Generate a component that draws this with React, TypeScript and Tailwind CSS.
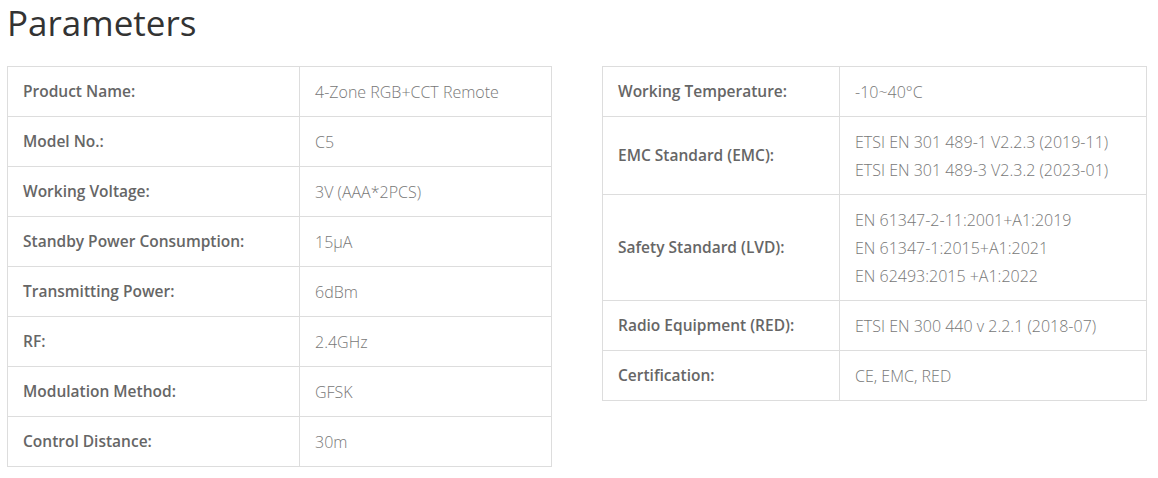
import React from 'react';

type Row = { label: string; values: string[] };

const left: Row[] = [
  { label: 'Product Name:', values: ['4-Zone RGB+CCT Remote'] },
  { label: 'Model No.:', values: ['C5'] },
  { label: 'Working Voltage:', values: ['3V (AAA*2PCS)'] },
  { label: 'Standby Power Consumption:', values: ['15μA'] },
  { label: 'Transmitting Power:', values: ['6dBm'] },
  { label: 'RF:', values: ['2.4GHz'] },
  { label: 'Modulation Method:', values: ['GFSK'] },
  { label: 'Control Distance:', values: ['30m'] },
];

const right: Row[] = [
  { label: 'Working Temperature:', values: ['-10~40°C'] },
  { label: 'EMC Standard (EMC):', values: ['ETSI EN 301 489-1 V2.2.3 (2019-11)', 'ETSI EN 301 489-3 V2.3.2 (2023-01)'] },
  {
    label: 'Safety Standard (LVD):',
    values: ['EN 61347-2-11:2001+A1:2019', 'EN 61347-1:2015+A1:2021', 'EN 62493:2015 +A1:2022'],
  },
  { label: 'Radio Equipment (RED):', values: ['ETSI EN 300 440 v 2.2.1 (2018-07)'] },
  { label: 'Certification:', values: ['CE, EMC, RED'] },
];

const ParamTable = ({ rows, labelWidth }: { rows: Row[]; labelWidth: string }) => (
  <table className="w-[545px] border-collapse border border-[#dddddd]">
    <tbody>
      {rows.map((row) => (
        <tr key={row.label}>
          <td
            className={`${labelWidth} border border-[#dddddd] px-[15px] py-[10.5px] align-middle text-[15.5px] font-semibold text-[#666666]`}
          >
            {row.label}
          </td>
          <td className="border border-[#dddddd] px-[15px] py-[10.5px] align-middle text-[16px] font-light text-[#777777]">
            {row.values.map((v) => (
              <div key={v} className="leading-[28px]">
                {v}
              </div>
            ))}
          </td>
        </tr>
      ))}
    </tbody>
  </table>
);

export default function App() {
  return (
    <div className="bg-white px-[7px] pt-[1px] font-['Open_Sans',sans-serif]">
      <h2 className="text-[35px] font-medium leading-[44px] text-[#333333]">Parameters</h2>
      <div className="mt-[21px] flex items-start gap-[50px]">
        <ParamTable rows={left} labelWidth="w-[292px]" />
        <ParamTable rows={right} labelWidth="w-[237px]" />
      </div>
    </div>
  );
}
